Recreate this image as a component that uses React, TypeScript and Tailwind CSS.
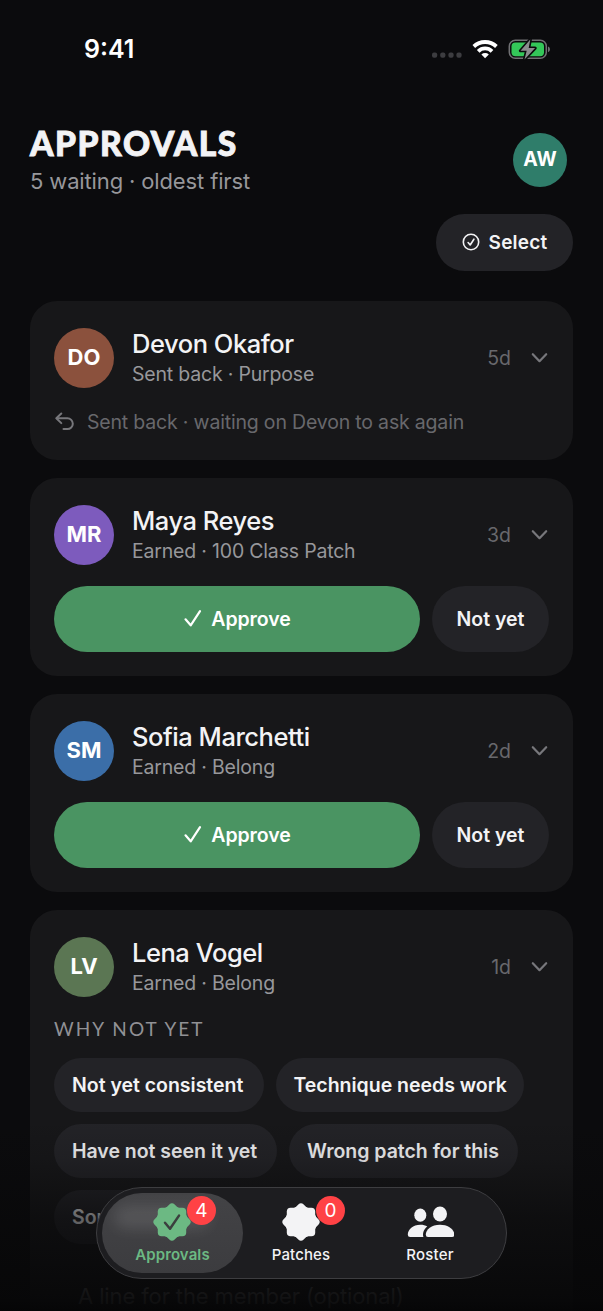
import { useState } from "react";

type Request = {
  initials: string;
  name: string;
  detail: string;
  age: string;
  color: string;
  state: "sentBack" | "pending" | "declining";
};

const requests: Request[] = [
  { initials: "DO", name: "Devon Okafor", detail: "Sent back · Purpose", age: "5d", color: "bg-[#8b513d]", state: "sentBack" },
  { initials: "MR", name: "Maya Reyes", detail: "Earned · 100 Class Patch", age: "3d", color: "bg-[#7d5bbd]", state: "pending" },
  { initials: "SM", name: "Sofia Marchetti", detail: "Earned · Belong", age: "2d", color: "bg-[#3b6ea8]", state: "pending" },
  { initials: "LV", name: "Lena Vogel", detail: "Earned · Belong", age: "1d", color: "bg-[#5b7653]", state: "declining" },
];

const reasons = [
  { label: "Not yet consistent", width: "w-[209.5px]" },
  { label: "Technique needs work", width: "w-[248px]" },
  { label: "Have not seen it yet", width: "w-[223px]" },
  { label: "Wrong patch for this", width: "w-[229px]" },
  { label: "Something else", width: "w-[180px]" },
];

function StatusBar() {
  return (
    <div className="flex h-[98px] items-center justify-between pl-[84px] pr-[52px]">
      <span className="text-[25px] font-semibold leading-8 text-white">9:41</span>
      <svg width="120" height="24" viewBox="0 0 120 24" fill="none">
        <g fill="#3d3d40">
          <rect x="1" y="15.5" width="5.2" height="5.2" rx="2" />
          <rect x="9.2" y="15.5" width="5.2" height="5.2" rx="2" />
          <rect x="17.4" y="15.5" width="5.2" height="5.2" rx="2" />
          <rect x="25.400" y="15.5" width="5.2" height="5.2" rx="2" />
        </g>
        <g stroke="#fff" strokeWidth="3.8">
          <path d="M42.800 9.5a16.400 16.400 0 0 1 22.600 0" />
          <path d="M47.200 14.300a9.8 9.8 0 0 1 13.800 0" />
        </g>
        <path d="M50.400 17.400a5.400 5.400 0 0 1 7.400 0L54.100 21.200z" fill="#fff" />
        <rect x="78.300" y="3.300" width="37" height="18" rx="6" stroke="#707073" strokeWidth="1.500" />
        <rect x="80.500" y="5.400" width="32.500" height="13.800" rx="4" fill="#34c759" />
        <path d="M117 9.500c2.600.8 2.600 4.800 0 5.600z" fill="#707073" />
        <path d="M99.300 2.600 89.500 13.700h6.200l-2.200 8.700 10.600-11.300h-6.400z" fill="#8b8b8e" stroke="#0b0b0d" strokeWidth="3.200" strokeLinejoin="round" paintOrder="stroke" />
      </svg>
    </div>
  );
}

function Header() {
  return (
    <header className="flex items-start justify-between pl-[30px] pr-9 pt-[25px]">
      <div>
        <h1 className="font-['Lato',sans-serif] text-[33.5px] font-black leading-[40px] tracking-[1.500px] text-[#f3f3f5] [-webkit-text-stroke:0.900px_#f3f3f5]">
          APPROVALS
        </h1>
        <p className="mt-1 text-[22px] leading-[28px] tracking-[-0.14px] text-[#97979b]">5 waiting · oldest first</p>
      </div>
      <div className="mt-[9.5px] flex size-[54px] items-center justify-center rounded-full bg-[#2f7d6a] pt-px text-[19.5px] font-bold text-white">
        AW
      </div>
    </header>
  );
}

function SelectButton({ active, onToggle }: { active: boolean; onToggle: () => void }) {
  return (
    <button
      aria-pressed={active}
      onClick={onToggle}
      className="flex h-[57px] w-[137px] items-center justify-center gap-[9px] rounded-full bg-[#232327] text-[19px] font-semibold text-[#f3f3f5]"
    >
      <svg width="18" height="18" viewBox="0 0 18 18" fill="none" stroke="currentColor" strokeWidth="1.6" strokeLinecap="round" strokeLinejoin="round">
        <circle cx="9" cy="9" r="7.700" />
        <path d="m6.100 9.500 2.100 2.500 3.700-5.800" />
      </svg>
      <span className="pt-[2px] tracking-[0.2px]">Select</span>
    </button>
  );
}

function PendingActions() {
  return (
    <div className="mt-[18px] flex gap-3">
      <button className="flex h-[66px] flex-1 items-center justify-center gap-[9px] rounded-full bg-[#4a9462] text-[19.5px] font-semibold text-white">
        <svg width="19" height="19" viewBox="0 0 19 19" fill="none" stroke="currentColor" strokeWidth="2.200" strokeLinecap="round" strokeLinejoin="round">
          <path d="m2.500 10.300 5.200 6L17 2.200" />
        </svg>
        <span className="pt-[2px] tracking-[-0.1px]">Approve</span>
      </button>
      <button className="h-[66px] w-[117px] rounded-full bg-[#232327] pt-[2px] text-[19.5px] font-semibold text-[#f3f3f5]">Not yet</button>
    </div>
  );
}

function SentBackNote() {
  return (
    <div className="mt-[18px] flex h-[27px] items-center gap-[13px] text-[19.5px] tracking-[-0.18px] text-[#68686c]">
      <svg width="20" height="20" viewBox="0 0 20 20" fill="none" stroke="#77777b" strokeWidth="2" strokeLinecap="round" strokeLinejoin="round">
        <path d="M7.300 1.500 2.300 6.300l5 4.800" />
        <path d="M2.800 6.300h10.600a4.900 4.900 0 0 1 0 10.800H9.500" />
      </svg>
      <span className="pt-[2px]">Sent back · waiting on Devon to ask again</span>
    </div>
  );
}

function DeclineForm() {
  return (
    <div className="mt-[18px]">
      <h3 className="font-['Lato',sans-serif] text-[19px] leading-[22px] tracking-[2.050px] text-[#919195]">WHY NOT YET</h3>
      <div className="mt-[18px] flex flex-wrap gap-3">
        {reasons.map((reason) => (
          <button
            key={reason.label}
            className={`${reason.width} h-[54px] whitespace-nowrap rounded-full bg-[#232327] px-[18px] pt-[2px] text-left text-[19.5px] font-semibold tracking-[-0.02px] text-[#f3f3f5]`}
          >
            {reason.label}
          </button>
        ))}
      </div>
      <div className="mt-[18px] flex h-[70px] items-center rounded-3xl px-6 text-[22px] tracking-[-0.120px] text-[#77777b]">
        A line for the member (optional)
      </div>
    </div>
  );
}

function RequestCard({ request }: { request: Request }) {
  return (
    <section className="rounded-[27px] bg-[#171719] p-6">
      <div className="flex h-[66px] items-center">
        <div className={`flex size-[60px] items-center justify-center rounded-full text-[22px] font-bold text-white ${request.color}`}>
          {request.initials}
        </div>
        <div className="ml-[18px] flex-1">
          <h2 className="-mt-px text-[25.5px] font-medium leading-[33px] tracking-[-0.46px] text-[#f3f3f5]">{request.name}</h2>
          <p className="pt-px text-[19.5px] leading-[27px] tracking-[-0.19px] text-[#97979b]">{request.detail}</p>
        </div>
        <span className="pt-[2px] text-[19.5px] text-[#68686c]">{request.age}</span>
        <svg className="ml-5" width="18" height="12" viewBox="0 0 18 12" fill="none" stroke="#77777b" strokeWidth="2.200" strokeLinecap="round" strokeLinejoin="round">
          <path d="m1.800 2.200 6.700 7 6.700-7" />
        </svg>
      </div>
      {request.state === "sentBack" && <SentBackNote />}
      {request.state === "pending" && <PendingActions />}
      {request.state === "declining" && <DeclineForm />}
    </section>
  );
}

function SealIcon({ checked }: { checked?: boolean }) {
  return (
    <svg width="40" height="40" viewBox="0 0 40 40">
      <g fill="currentColor">
        <rect x="5.800" y="5.800" width="28.400" height="28.400" rx="3.800" />
        <rect x="5.800" y="5.800" width="28.400" height="28.400" rx="3.800" transform="rotate(45 20 20)" />
        <circle cx="20" cy="20" r="15.800" />
      </g>
      {checked && (
        <path d="m13 20.800 5 6 9-13.200" fill="none" stroke="#3b3f3e" strokeWidth="2.500" strokeLinecap="round" strokeLinejoin="round" />
      )}
    </svg>
  );
}

function RosterIcon() {
  return (
    <svg width="48" height="40" viewBox="0 0 48 40" fill="currentColor">
      <ellipse cx="14.300" cy="13.200" rx="6" ry="6.600" />
      <ellipse cx="34" cy="12" rx="7" ry="7.500" />
      <path d="M4.200 35q-2.400 0-2.400-2.300c0-5.200 5.300-10 12.500-10 2.800 0 5.200.6 7 1.700-3.400 2.800-5 6.400-3.900 10.600z" />
      <path d="M22 35q-2.200 0-2.200-2.300c0-5.200 5.800-10 14.200-10s14.400 4.800 14.400 10q0 2.300-2.400 2.300z" />
    </svg>
  );
}

function TabBadge({ count }: { count: number }) {
  return (
    <span className="absolute -right-[24px] -top-[6px] flex size-[29px] items-center justify-center rounded-full bg-[#ff4245] pt-px text-[19px] font-normal text-white">
      {count}
    </span>
  );
}

function TabBar() {
  return (
    <nav className="absolute left-[96px] top-[1187px] flex h-[92px] w-[411px] rounded-full border border-[#3d3d40] bg-[#1d1d20] p-[5px] text-[15px] font-medium text-[#f3f3f5]">
      <div className="relative flex w-[141px] flex-col items-center rounded-full bg-linear-to-b from-[#434346] to-[#3c3c3f] pt-[9px] font-semibold text-[#6cb983]">
        {/* light caught by the glass */}
        <div className="absolute left-3 top-3 h-6 w-24 rounded-full bg-white/10 blur-[7px]" />
        <div className="relative -left-[0.5px]">
          <SealIcon checked />
          <TabBadge count={4} />
        </div>
        <span className="pt-[2px] leading-[22px] tracking-[0.1px]">Approvals</span>
      </div>
      <div className="flex w-[116px] flex-col items-center pt-[9px]">
        <div className="relative">
          <SealIcon />
          <TabBadge count={0} />
        </div>
        <span className="pt-[2px] leading-[22px] tracking-[0.1px]">Patches</span>
      </div>
      <div className="flex flex-1 flex-col items-center pt-[9px]">
        <RosterIcon />
        <span className="pt-[2px] leading-[22px] tracking-[0.2px]">Roster</span>
      </div>
    </nav>
  );
}

export default function App() {
  const [selecting, setSelecting] = useState(false);

  return (
    <div className="relative h-[1311px] w-[603px] overflow-hidden bg-[#0b0b0d] font-['Inter',sans-serif]">
      <StatusBar />
      <Header />
      <div className="-mt-[6.5px] flex justify-end pr-[30px] pt-[25px]">
        <SelectButton active={selecting} onToggle={() => setSelecting(!selecting)} />
      </div>
      <main className="mt-[30px] flex flex-col gap-[18px] px-[30px]">
        {requests.map((request) => (
          <RequestCard key={request.initials} request={request} />
        ))}
      </main>
      {/* fades the list out behind the tab bar */}
      <div className="pointer-events-none absolute inset-x-0 bottom-0 h-[191px] bg-[linear-gradient(to_bottom,rgba(8,8,9,0)_0%,rgba(8,8,9,0.13)_20%,rgba(8,8,9,0.6)_51%,rgba(7,7,8,0.9)_93%,rgba(5,5,6,0.95)_100%)]" />
      <TabBar />
    </div>
  );
}
